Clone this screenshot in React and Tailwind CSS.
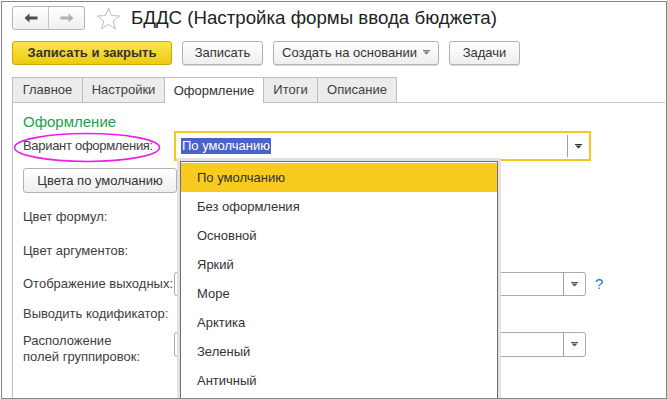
import React from "react";

const Arrow = ({ color = "#333" }) => (
  <svg width="7" height="5" viewBox="0 0 7 5">
    <rect x="0" y="0" width="7" height="1" fill={color} />
    <path d="M0.5 1.5 L6.5 1.5 L3.5 4.5 Z" fill={color} />
  </svg>
);

const Combo = ({ w, h, focused, children, arrowColor }) => (
  <div
    className={
      "flex items-stretch bg-white " +
      (focused
        ? "border-2 border-[#f5c918]"
        : "border border-[#a9a9a9] rounded-[3px]")
    }
    style={{ width: w, height: h }}
  >
    <div className="flex-1 flex items-center pl-[5px] overflow-hidden">{children}</div>
    <div className={"w-[22px] flex items-center justify-center border-l border-[#a0a0a0] " + (focused ? "my-[2px]" : "")}>
      <Arrow color={arrowColor} />
    </div>
  </div>
);

const Btn = ({ w, children, yellow, className = "" }) => (
  <div
    className={
      "h-[24px] flex items-center justify-center rounded-[3px] border text-[13px] text-[#333] " +
      (yellow
        ? "bg-gradient-to-b from-[#fbe44a] to-[#eccb05] border-[#c9aa0a] font-bold"
        : "bg-gradient-to-b from-white to-[#eeeeee] border-[#b3b3b3] shadow-[0_1px_0_#d8d8d8]") +
      " " +
      className
    }
    style={{ width: w }}
  >
    {children}
  </div>
);

const tabs = [
  { t: "Главное", w: 70 },
  { t: "Настройки", w: 82 },
  { t: "Оформление", w: 99, active: true },
  { t: "Итоги", w: 54 },
  { t: "Описание", w: 80 },
];

const items = [
  "По умолчанию",
  "Без оформления",
  "Основной",
  "Яркий",
  "Море",
  "Арктика",
  "Зеленый",
  "Античный",
];

export default function App() {
  return (
    <div className="w-[667px] h-[399px] bg-white font-['Liberation_Sans',Arial,sans-serif] text-[#404040]">
      <div className="relative ml-[1px] mt-[1px] w-[666px] h-[398px] border border-[#858585] overflow-hidden flex flex-col pl-[10px]">
        {/* header */}
        <div className="flex items-center mt-[4px] h-[24px]">
          <div className="w-[73px] h-[24px] flex rounded-[3px] border border-[#b5b5b5] bg-gradient-to-b from-white to-[#efefef]">
            <div className="flex-1 flex items-center justify-center border-r border-[#c4c4c4]">
              <svg width="14" height="10" viewBox="0 0 14 10">
                <path d="M0.5 5 L5.5 0.5 L5.5 3.5 L13.5 3.5 L13.5 6.5 L5.5 6.5 L5.5 9.5 Z" fill="#4d4d4d" />
              </svg>
            </div>
            <div className="flex-1 flex items-center justify-center">
              <svg width="14" height="10" viewBox="0 0 14 10">
                <path d="M13.5 5 L8.5 0.5 L8.5 3.5 L0.5 3.5 L0.5 6.5 L8.5 6.5 L8.5 9.5 Z" fill="#b0b0b0" />
              </svg>
            </div>
          </div>
          <svg className="ml-[11px]" width="25" height="23" viewBox="0 0 25 23">
            <path
              d="M12.5 1 L15.4 8.6 L23.5 8.9 L17.2 14 L19.4 21.9 L12.5 17.4 L5.6 21.9 L7.8 14 L1.5 8.9 L9.6 8.6 Z"
              fill="white"
              stroke="#bdbdbd"
              strokeWidth="1"
            />
          </svg>
          <div className="ml-[10px] text-[18.7px] leading-[24px] text-[#222] whitespace-nowrap">
            БДДС (Настройка формы ввода бюджета)
          </div>
        </div>

        {/* buttons */}
        <div className="flex gap-[10px] mt-[11px]">
          <Btn w={160} yellow>Записать и закрыть</Btn>
          <Btn w={81}>Записать</Btn>
          <Btn w={166}>
            <span>Создать на основании</span>
            <span className="ml-[6px] mb-[1px]"><Arrow color="#777" /></span>
          </Btn>
          <Btn w={71}>Задачи</Btn>
        </div>

        {/* tabs */}
        <div className="flex mt-[12px] h-[26px]">
          {tabs.map((t, i) => (
            <div
              key={t.t}
              className={
                "flex items-center justify-center text-[13px] border-t border-l border-[#bdbdbd] " +
                (t.active ? "bg-white text-[#333]" : "bg-[#ececec] border-b text-[#404040]") +
                (i === tabs.length - 1 ? " border-r" : "")
              }
              style={{ width: t.w }}
            >
              {t.t}
            </div>
          ))}
          <div className="flex-1 border-b border-[#c8c8c8] mr-[1px]" />
        </div>

        {/* panel */}
        <div className="flex-1 border-l border-[#bdbdbd] pl-[10px] text-[13px]">
          <div className="mt-[10px] h-[18px] leading-[18px] text-[15px] text-[#1da24a]">Оформление</div>

          <div className="flex items-center h-[30px]">
            <div className="w-[151px] tracking-[-0.3px]">Вариант оформления:</div>
            <Combo w={417} h={30} focused arrowColor="#333">
              <span className="bg-[#4a63c6] text-white leading-[15px] px-[1px] pb-[1px]">По умолчанию</span>
            </Combo>
          </div>

          <div className="mt-[7px] flex">
            <div className="w-[154px] h-[25px] flex items-center justify-center rounded-[3px] border border-[#b3b3b3] bg-gradient-to-b from-white to-[#eeeeee] text-[#333]">
              Цвета по умолчанию
            </div>
          </div>

          <div className="mt-[12px] h-[23px] flex items-center">Цвет формул:</div>
          <div className="mt-[11px] h-[23px] flex items-center">Цвет аргументов:</div>

          <div className="mt-[10px] h-[24px] flex items-center">
            <div className="w-[151px]">Отображение выходных:</div>
            <Combo w={412} h={24} arrowColor="#555" />
            <span className="ml-[9px] text-[15px] text-[#1f78cf]">?</span>
          </div>

          <div className="mt-[6px] h-[23px] flex items-center">Выводить кодификатор:</div>

          <div className="mt-[7px] h-[25px] flex items-start">
            <div className="w-[151px] leading-[16px] mt-[1px]">
              Расположение
              <br />
              полей группировок:
            </div>
            <Combo w={412} h={25} arrowColor="#555" />
          </div>
        </div>

        {/* magenta ellipse annotation */}
        <svg className="absolute left-[11px] top-[130px]" width="148" height="31" viewBox="0 0 148 31">
          <ellipse cx="74" cy="15.5" rx="72.5" ry="14" fill="none" stroke="#ea1ee6" strokeWidth="1.6" />
        </svg>

        {/* dropdown popup */}
        <div className="absolute left-[175px] top-[156px] w-[324px] h-[260px] border-[3px] border-[#e2e2e2] bg-white">
          <div className="h-full border border-[#6e6e6e] pt-[1px] text-[13px] text-[#333]">
            {items.map((it, i) => (
              <div
                key={it}
                className={"h-[29px] flex items-center pl-[16px] " + (i === 0 ? "bg-[#f9cb1f]" : "")}
              >
                {it}
              </div>
            ))}
          </div>
        </div>
      </div>
    </div>
  );
}
